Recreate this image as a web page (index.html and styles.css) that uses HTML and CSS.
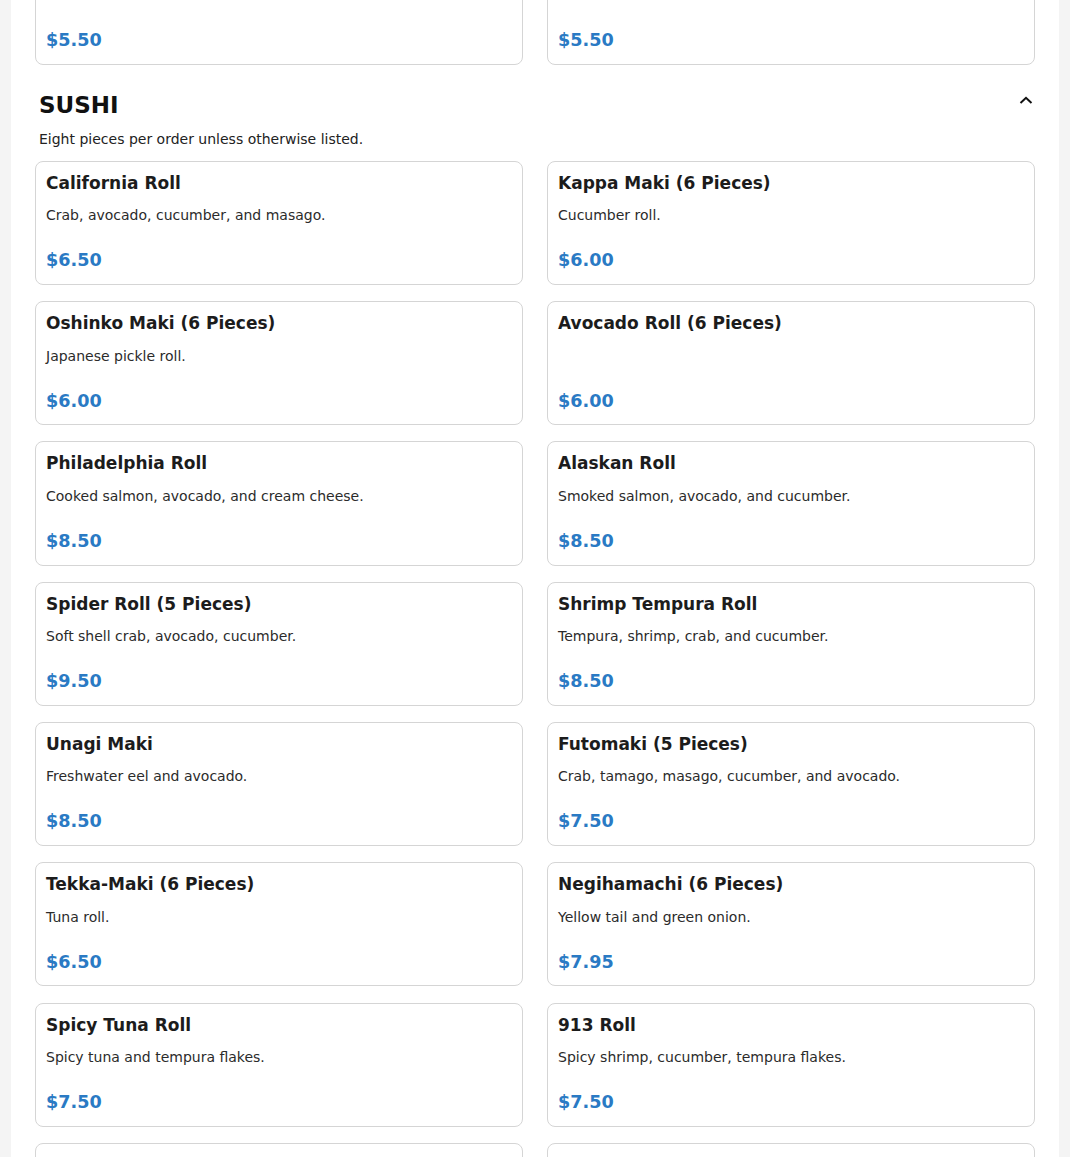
FILE: index.html
```html
<!DOCTYPE html>
<html lang="en">
<head>
<meta charset="utf-8">
<title>Menu</title>
<link rel="stylesheet" href="styles.css">
</head>
<body>
<main class="page">
  <section class="section section-prev">
    <div class="grid">
      <article class="card">
        <h3 class="item-name">Edamame</h3>
        <div class="item-price">$5.50</div>
      </article>
      <article class="card">
        <h3 class="item-name">Seaweed Salad</h3>
        <div class="item-price">$5.50</div>
      </article>
    </div>
  </section>

  <section class="section">
    <header class="section-head">
      <div>
        <h2 class="section-title">SUSHI</h2>
        <p class="section-note">Eight pieces per order unless otherwise listed.</p>
      </div>
      <svg class="chevron" width="14" height="12" viewBox="0 0 14 12" aria-hidden="true">
        <polyline points="1.5,9 7,3.8 12.5,9" fill="none" stroke="#111" stroke-width="2"/>
      </svg>
    </header>
    <div class="grid">
      <article class="card">
        <h3 class="item-name">California Roll</h3>
        <p class="item-desc">Crab, avocado, cucumber, and masago.</p>
        <div class="item-price">$6.50</div>
      </article>
      <article class="card">
        <h3 class="item-name">Kappa Maki (6 Pieces)</h3>
        <p class="item-desc">Cucumber roll.</p>
        <div class="item-price">$6.00</div>
      </article>
      <article class="card">
        <h3 class="item-name">Oshinko Maki (6 Pieces)</h3>
        <p class="item-desc">Japanese pickle roll.</p>
        <div class="item-price">$6.00</div>
      </article>
      <article class="card">
        <h3 class="item-name">Avocado Roll (6 Pieces)</h3>
        <div class="item-price">$6.00</div>
      </article>
      <article class="card">
        <h3 class="item-name">Philadelphia Roll</h3>
        <p class="item-desc">Cooked salmon, avocado, and cream cheese.</p>
        <div class="item-price">$8.50</div>
      </article>
      <article class="card">
        <h3 class="item-name">Alaskan Roll</h3>
        <p class="item-desc">Smoked salmon, avocado, and cucumber.</p>
        <div class="item-price">$8.50</div>
      </article>
      <article class="card">
        <h3 class="item-name">Spider Roll (5 Pieces)</h3>
        <p class="item-desc">Soft shell crab, avocado, cucumber.</p>
        <div class="item-price">$9.50</div>
      </article>
      <article class="card">
        <h3 class="item-name">Shrimp Tempura Roll</h3>
        <p class="item-desc">Tempura, shrimp, crab, and cucumber.</p>
        <div class="item-price">$8.50</div>
      </article>
      <article class="card">
        <h3 class="item-name">Unagi Maki</h3>
        <p class="item-desc">Freshwater eel and avocado.</p>
        <div class="item-price">$8.50</div>
      </article>
      <article class="card">
        <h3 class="item-name">Futomaki (5 Pieces)</h3>
        <p class="item-desc">Crab, tamago, masago, cucumber, and avocado.</p>
        <div class="item-price">$7.50</div>
      </article>
      <article class="card">
        <h3 class="item-name">Tekka-Maki (6 Pieces)</h3>
        <p class="item-desc">Tuna roll.</p>
        <div class="item-price">$6.50</div>
      </article>
      <article class="card">
        <h3 class="item-name">Negihamachi (6 Pieces)</h3>
        <p class="item-desc">Yellow tail and green onion.</p>
        <div class="item-price">$7.95</div>
      </article>
      <article class="card">
        <h3 class="item-name">Spicy Tuna Roll</h3>
        <p class="item-desc">Spicy tuna and tempura flakes.</p>
        <div class="item-price">$7.50</div>
      </article>
      <article class="card">
        <h3 class="item-name">913 Roll</h3>
        <p class="item-desc">Spicy shrimp, cucumber, tempura flakes.</p>
        <div class="item-price">$7.50</div>
      </article>
      <article class="card">
        <h3 class="item-name">Spicy Crab Roll</h3>
        <p class="item-desc">Spicy crab and tempura flakes.</p>
        <div class="item-price">$7.50</div>
      </article>
      <article class="card">
        <h3 class="item-name">Kanpyo Roll</h3>
        <p class="item-desc">Sweet gourd roll.</p>
        <div class="item-price">$6.00</div>
      </article>
    </div>
  </section>
</main>
</body>
</html>
```

FILE: styles.css
```css
html, body {
  margin: 0;
  padding: 0;
  background: #f4f4f4;
  font-family: "DejaVu Sans", Verdana, sans-serif;
  color: #1c1c1c;
}

.page {
  max-width: 1000px;
  margin: -59px auto 0;
  padding: 0 24px 40px;
  background: #ffffff;
  overflow: hidden;
}

.section-head {
  display: flex;
  justify-content: space-between;
  align-items: flex-start;
  padding: 26px 2px 0 4px;
}

.section-title {
  margin: 0;
  font-size: 23px;
  line-height: 1.25;
  font-weight: 700;
  color: #111;
}

.section-note {
  margin: 9px 0 0;
  font-size: 14px;
  line-height: 1.5;
  color: #222;
}

.chevron {
  display: block;
  margin-top: 3px;
}

.section-head + .grid {
  margin-top: 11px;
}

.grid {
  display: grid;
  grid-template-columns: 1fr 1fr;
  column-gap: 24px;
  row-gap: 16.2px;
}

.card {
  display: flex;
  flex-direction: column;
  border: 1px solid #d5d5d5;
  border-radius: 8px;
  padding: 11px 10px 12.6px;
  min-height: 98.5px;
}

.item-name {
  margin: 0 0 12px;
  font-size: 17px;
  line-height: 1.2;
  font-weight: 700;
  color: #1c1c1c;
}

.item-desc {
  margin: 0 0 24px;
  font-size: 14px;
  line-height: 1.5;
  color: #2b2b2b;
}

.item-price {
  margin-top: auto;
  font-size: 17.6px;
  line-height: 1.2;
  font-weight: 700;
  color: #2a7ac4;
}
```
